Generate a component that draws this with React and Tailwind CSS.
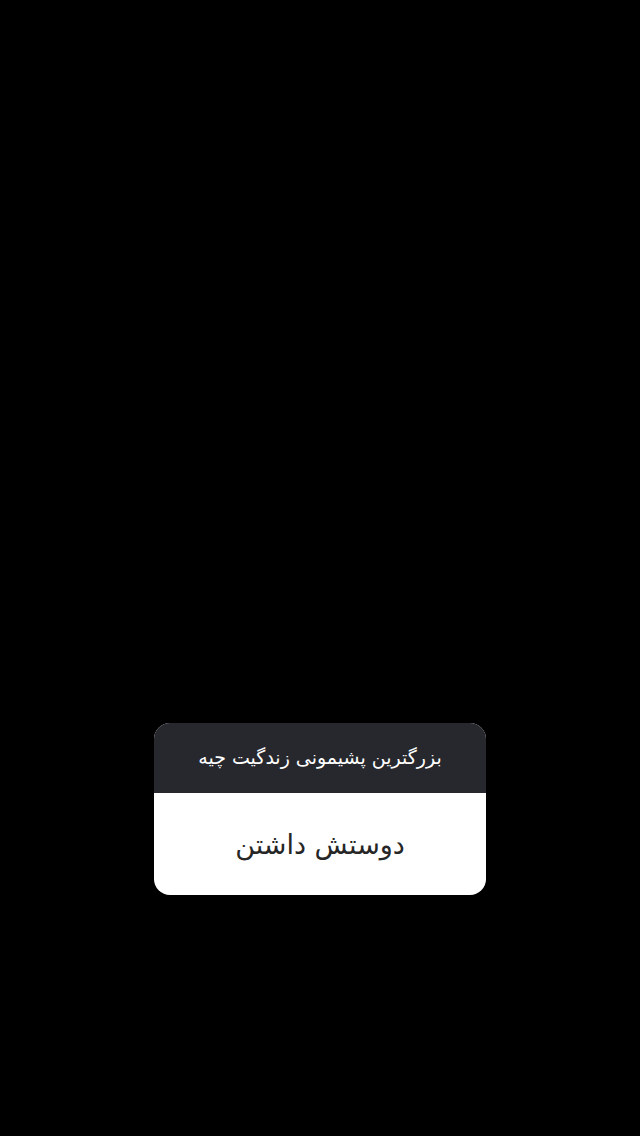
export default function App() {
  return (
    <div className="min-h-[1136px] w-full bg-black flex flex-col items-center pt-[723px]" style={{ fontFamily: '"DejaVu Sans", sans-serif' }} dir="rtl">
      <div className="w-[332px] rounded-[16px] overflow-hidden bg-white">
        <div className="h-[70px] bg-[#26282d] flex items-center justify-center">
          <span className="text-white text-[19px] leading-none pb-[2px]">بزرگترین پشیمونی زندگیت چیه</span>
        </div>
        <div className="h-[102px] flex items-center justify-center">
          <span className="text-[#262626] text-[27px] leading-none">دوستش داشتن</span>
        </div>
      </div>
    </div>
  );
}
